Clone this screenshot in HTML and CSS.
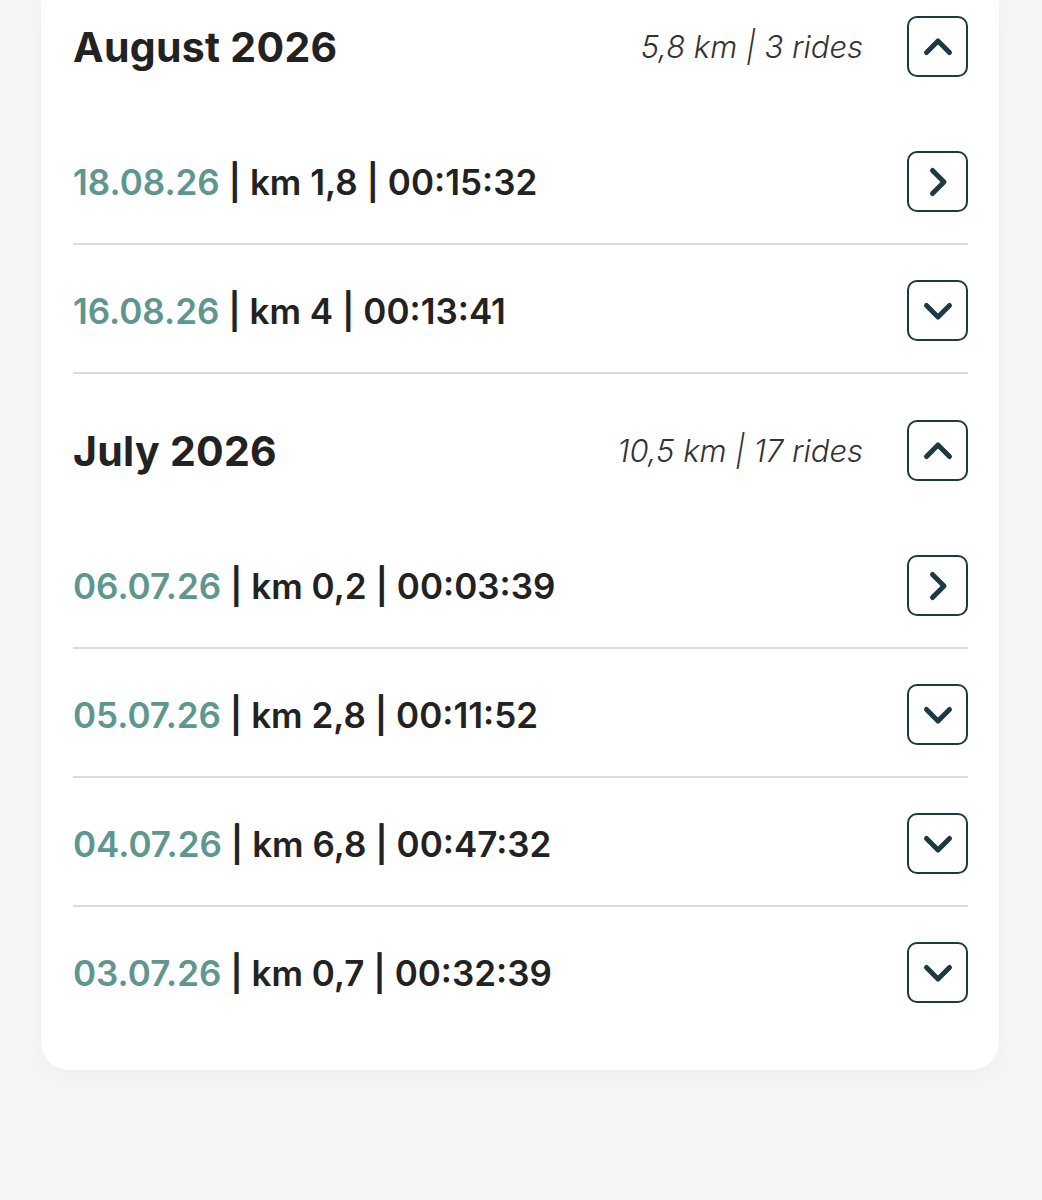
FILE: index.html
```html
<!DOCTYPE html>
<html lang="en">
<head>
<meta charset="utf-8">
<title>Rides</title>
<link rel="stylesheet" href="styles.css">
</head>
<body>
<div class="card">
  <section class="month">
    <div class="month-head">
      <h2 class="month-title">August 2026</h2>
      <span class="month-sum">5,8 km | 3 rides</span>
      <button class="icon-btn" aria-label="Collapse"><svg viewBox="0 0 32 32" width="32" height="32"><path d="M4.5 21.5 L16 10 L27.5 21.5"/></svg></button>
    </div>
    <div class="rides">
      <div class="ride">
        <span class="ride-text"><span class="date">18.08.26</span> | km 1,8 | 00:15:32</span>
        <button class="icon-btn" aria-label="Open"><svg viewBox="0 0 32 32" width="32" height="32"><path d="M10.5 4.5 L22 16 L10.5 27.5"/></svg></button>
      </div>
      <div class="ride">
        <span class="ride-text"><span class="date">16.08.26</span> | km 4 | 00:13:41</span>
        <button class="icon-btn" aria-label="Expand"><svg viewBox="0 0 32 32" width="32" height="32"><path d="M4.5 10.5 L16 22 L27.5 10.5"/></svg></button>
      </div>
    </div>
  </section>
  <section class="month">
    <div class="month-head">
      <h2 class="month-title">July 2026</h2>
      <span class="month-sum">10,5 km | 17 rides</span>
      <button class="icon-btn" aria-label="Collapse"><svg viewBox="0 0 32 32" width="32" height="32"><path d="M4.5 21.5 L16 10 L27.5 21.5"/></svg></button>
    </div>
    <div class="rides">
      <div class="ride">
        <span class="ride-text"><span class="date">06.07.26</span> | km 0,2 | 00:03:39</span>
        <button class="icon-btn" aria-label="Open"><svg viewBox="0 0 32 32" width="32" height="32"><path d="M10.5 4.5 L22 16 L10.5 27.5"/></svg></button>
      </div>
      <div class="ride">
        <span class="ride-text"><span class="date">05.07.26</span> | km 2,8 | 00:11:52</span>
        <button class="icon-btn" aria-label="Expand"><svg viewBox="0 0 32 32" width="32" height="32"><path d="M4.5 10.5 L16 22 L27.5 10.5"/></svg></button>
      </div>
      <div class="ride">
        <span class="ride-text"><span class="date">04.07.26</span> | km 6,8 | 00:47:32</span>
        <button class="icon-btn" aria-label="Expand"><svg viewBox="0 0 32 32" width="32" height="32"><path d="M4.5 10.5 L16 22 L27.5 10.5"/></svg></button>
      </div>
      <div class="ride">
        <span class="ride-text"><span class="date">03.07.26</span> | km 0,7 | 00:32:39</span>
        <button class="icon-btn" aria-label="Expand"><svg viewBox="0 0 32 32" width="32" height="32"><path d="M4.5 10.5 L16 22 L27.5 10.5"/></svg></button>
      </div>
    </div>
  </section>
</div>
</body>
</html>
```

FILE: styles.css
```css
html, body {
  margin: 0;
  padding: 0;
}
body {
  background: #f6f6f6;
  font-family: Inter, "Noto Sans", sans-serif;
  color: #222222;
  height: 1200px;
}
.card {
  margin: 0 43px 0 41px;
  background: #ffffff;
  border-radius: 0 0 28px 28px;
  padding: 16px 31px 36px 32px;
  box-shadow: 0 6px 24px rgba(0, 0, 0, 0.035);
}
.month + .month {
  margin-top: 46px;
}
.month-head {
  display: flex;
  align-items: center;
  height: 61px;
}
.month-title {
  flex: 1;
  margin: 0;
  font-size: 41px;
  font-weight: 700;
  letter-spacing: 0.3px;
  color: #222222;
}
.month-sum {
  margin-right: 44px;
  font-size: 31px;
  font-weight: 300;
  font-style: italic;
  color: #333333;
}
.icon-btn {
  flex: none;
  width: 61px;
  height: 61px;
  padding: 0;
  border: 2px solid #1d3944;
  border-radius: 10px;
  background: #ffffff;
  display: flex;
  align-items: center;
  justify-content: center;
}
.icon-btn svg {
  display: block;
}
.icon-btn path {
  fill: none;
  stroke: #1d3944;
  stroke-width: 5;
  stroke-linecap: round;
  stroke-linejoin: round;
}
.rides {
  margin-top: 39px;
}
.ride {
  display: flex;
  align-items: center;
  justify-content: space-between;
  padding: 35px 0 31px;
  border-bottom: 2px solid #dcdcdc;
}
.month:last-child .ride:last-child {
  border-bottom: none;
}
.ride-text {
  font-size: 35px;
  font-weight: 600;
  color: #222222;
}
.date {
  color: #5f9690;
  font-weight: 600;
}
```
